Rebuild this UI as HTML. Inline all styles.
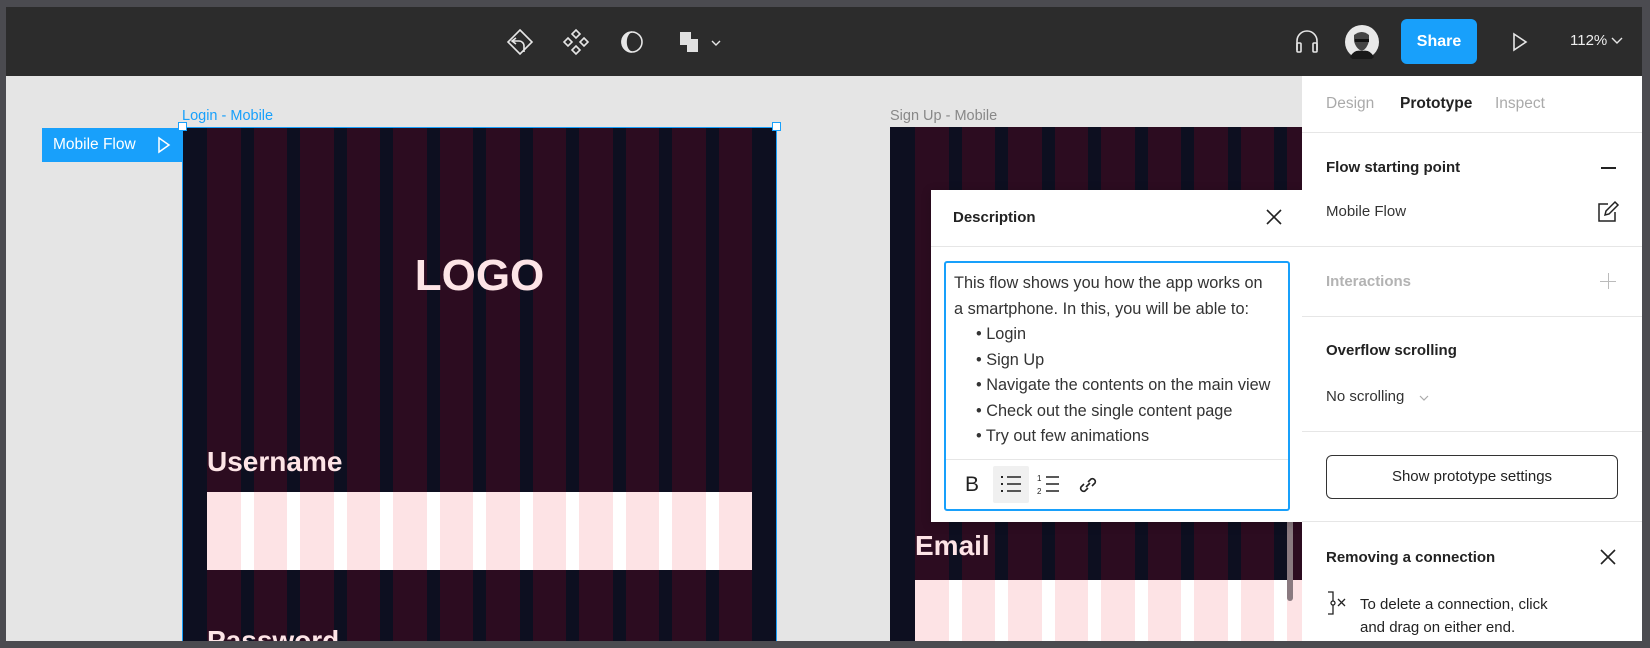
<!DOCTYPE html>
<html><head><meta charset="utf-8"><style>
*{box-sizing:border-box;margin:0;padding:0}
body{width:1650px;height:648px;overflow:hidden;background:#4b4b50;font-family:"Liberation Sans",sans-serif;position:relative}
.abs{position:absolute}
.cols{position:absolute;display:flex;gap:13px}
.cols div{flex:1;background:#2c0c20}
.pcols div{background:#fde3e5}
.ptxt{font-size:15px;color:#333}
.pb{font-size:15px;font-weight:bold;color:#222}
.div{position:absolute;left:1302px;width:340px;height:1px;background:#e6e6e6}
.dt{font-size:16.3px;color:#333;line-height:25.5px}
</style></head><body>
<div class="abs" style="left:6px;top:7px;width:1636px;height:69px;background:#2c2c2c"></div>
<div class="abs" style="left:6px;top:76px;width:1296px;height:565px;background:#e5e5e5;overflow:hidden"></div>
<svg class="abs" style="left:500px;top:22px" width="240" height="40" viewBox="500 22 240 40" fill="none" stroke="#e6e6e6" stroke-width="1.6">
<path d="M520 30 L532 42 L520 54 L508 42 Z"/>
<path d="M516 44 l-4 -3 4 -3 M512 41 h7 a5 5 0 0 1 5 5 v6"/>
<path d="M576 30 l4 4 -4 4 -4 -4z M576 46 l4 4 -4 4 -4 -4z M568 38 l4 4 -4 4 -4 -4z M584 38 l4 4 -4 4 -4 -4z"/>
<circle cx="632" cy="42" r="10"/>
<path d="M632 32 a10 10 0 0 0 0 20 a6 10 0 0 1 0 -20z" fill="#e6e6e6"/>
<path d="M680 32 h11 v7 h7 v13 h-11 v-7 h-7z" fill="#e0e0e0" stroke="none"/>
<path d="M712 41 l4 4 4 -4" stroke-width="1.4"/>
</svg>
<svg class="abs" style="left:1290px;top:22px" width="40" height="40" viewBox="1290 22 40 40" fill="none" stroke="#e6e6e6" stroke-width="1.6">
<path d="M1297 50 v-9 a10 10 0 0 1 20 0 v9"/>
<rect x="1297" y="43" width="4" height="9" rx="1"/><rect x="1313" y="43" width="4" height="9" rx="1"/>
</svg>
<svg class="abs" style="left:1345px;top:25px" width="34" height="34" viewBox="0 0 34 34">
<circle cx="17" cy="17" r="17" fill="#e8e8e8"/>
<path d="M9 10 q8 -6 15 0 l0 6 q-2 8 -7 10 q-6 -2 -8 -10z" fill="#444"/>
<rect x="10" y="14" width="14" height="3" fill="#111"/>
<path d="M5 32 q4 -8 12 -6 q8 -2 12 6 a17 17 0 0 1 -24 0z" fill="#1a1a1a"/>
</svg>
<div class="abs" style="left:1401px;top:19px;width:76px;height:45px;background:#18a0fb;border-radius:6px;color:#fff;font-weight:bold;font-size:16px;text-align:center;line-height:45px">Share</div>
<svg class="abs" style="left:1508px;top:30px" width="24" height="24" fill="none" stroke="#e6e6e6" stroke-width="1.6"><path d="M6 4 L18 12 L6 20Z"/></svg>
<div class="abs" style="left:1570px;top:32px;color:#eee;font-size:15px">112%</div>
<svg class="abs" style="left:1610px;top:36px" width="14" height="10" fill="none" stroke="#e6e6e6" stroke-width="1.4"><path d="M2 2 l5 5 5 -5"/></svg>

<div class="abs" style="left:182px;top:108px;font-size:14.5px;color:#18a0fb">Login - Mobile</div>
<div class="abs" style="left:42px;top:128px;width:140px;height:34px;background:#18a0fb;color:#fff;font-size:15.5px;line-height:34px;padding-left:11px">Mobile Flow</div>
<svg class="abs" style="left:156px;top:136px" width="16" height="18" fill="none" stroke="#fff" stroke-width="1.5"><path d="M3 2 L13 9 L3 16Z"/></svg>
<div class="abs" style="left:182px;top:127px;width:595px;height:514px;background:#0d0f20;border:1px solid #18a0fb;border-bottom:none;overflow:hidden">
  <div class="cols" style="left:24px;top:0;width:545px;height:514px"><div></div><div></div><div></div><div></div><div></div><div></div><div></div><div></div><div></div><div></div><div></div><div></div></div>
  <div class="abs" style="left:0;width:593px;top:126px;text-align:center;color:#fde4e6;font-weight:bold;font-size:44px;line-height:1">LOGO</div>
  <div class="abs" style="left:24px;top:318px;color:#fde4e6;font-weight:bold;font-size:28px">Username</div>
  <div class="abs" style="left:24px;top:364px;width:545px;height:78px;background:#fff"><div class="cols pcols" style="left:0;top:0;width:545px;height:78px"><div></div><div></div><div></div><div></div><div></div><div></div><div></div><div></div><div></div><div></div><div></div><div></div></div></div>
  <div class="abs" style="left:24px;top:497px;color:#fde4e6;font-weight:bold;font-size:28px">Password</div>
</div>
<div class="abs" style="left:178px;top:122px;width:9px;height:9px;background:#fff;border:1px solid #18a0fb"></div>
<div class="abs" style="left:772px;top:122px;width:9px;height:9px;background:#fff;border:1px solid #18a0fb"></div>

<div class="abs" style="left:890px;top:108px;font-size:14.5px;color:#888">Sign Up - Mobile</div>
<div class="abs" style="left:890px;top:127px;width:412px;height:514px;background:#0d0f20;overflow:hidden">
  <div class="cols" style="left:25px;top:0;width:545px;height:514px"><div></div><div></div><div></div><div></div><div></div><div></div><div></div><div></div><div></div><div></div><div></div><div></div></div>
  <div class="abs" style="left:25px;top:403px;color:#fde4e6;font-weight:bold;font-size:28px">Email</div>
  <div class="abs" style="left:25px;top:453px;width:545px;height:78px;background:#fff"><div class="cols pcols" style="left:0;top:0;width:545px;height:78px"><div></div><div></div><div></div><div></div><div></div><div></div><div></div><div></div><div></div><div></div><div></div><div></div></div></div>
  <div class="abs" style="left:397px;top:390px;width:6px;height:84px;border-radius:3px;background:#8a7a80"></div>
</div>

<div class="abs" style="left:931px;top:190px;width:372px;height:332px;background:#fff;box-shadow:0 2px 10px rgba(0,0,0,.2)">
  <div class="abs pb" style="left:22px;top:19px">Description</div>
  <svg class="abs" style="left:333px;top:17px" width="20" height="20" fill="none" stroke="#222" stroke-width="1.6"><path d="M3 3 L17 17 M17 3 L3 17"/></svg>
  <div class="abs" style="left:0;top:56px;width:372px;height:1px;background:#e6e6e6"></div>
  <div class="abs" style="left:13px;top:71px;width:346px;height:250px;border:2px solid #18a0fb;border-radius:3px">
    <div class="abs dt" style="left:8px;top:8px;white-space:nowrap">This flow shows you how the app works on<br>a smartphone. In this, you will be able to:</div>
    <div class="abs dt" style="left:30px;top:59px;white-space:nowrap">• Login<br>• Sign Up<br>• Navigate the contents on the main view<br>• Check out the single content page<br>• Try out few animations</div>
    <div class="abs" style="left:0;top:196px;width:342px;height:1px;background:#e6e6e6"></div>
    <div class="abs" style="left:47px;top:203px;width:36px;height:37px;background:#f0f0f0;border-radius:2px"></div>
    <div class="abs" style="left:19px;top:210px;font-size:21px;color:#222">B</div>
    <svg class="abs" style="left:52px;top:209px" width="26" height="26" fill="none" stroke="#222" stroke-width="1.5"><path d="M9 5h14M9 12h14M9 19h14"/><path d="M3 5h2M3 12h2M3 19h2" stroke-width="2"/></svg>
    <svg class="abs" style="left:90px;top:208px" width="26" height="28" fill="none" stroke="#222" stroke-width="1.5"><path d="M10 6h13M10 13h13M10 20h13"/><text x="1" y="10" font-size="8" fill="#222" stroke="none" font-family="Liberation Sans">1</text><text x="1" y="23" font-size="8" fill="#222" stroke="none" font-family="Liberation Sans">2</text></svg>
    <svg class="abs" style="left:129px;top:209px" width="26" height="26" fill="none" stroke="#222" stroke-width="1.6"><path d="M11 15 l4 -4 M9 12 l-3 3 a3 3 0 0 0 4 4 l3 -3 M17 14 l3 -3 a3 3 0 0 0 -4 -4 l-3 3"/></svg>
  </div>
</div>

<div class="abs" style="left:1302px;top:76px;width:340px;height:565px;background:#fff"></div>
<div class="abs" style="left:1326px;top:95px;font-size:15.5px;color:#aaa">Design</div>
<div class="abs pb" style="left:1400px;top:95px;font-size:15.5px">Prototype</div>
<div class="abs" style="left:1495px;top:95px;font-size:15.5px;color:#aaa">Inspect</div>
<div class="div" style="top:132px"></div>
<div class="abs pb" style="left:1326px;top:159px">Flow starting point</div>
<div class="abs" style="left:1601px;top:167px;width:15px;height:1.6px;background:#222"></div>
<div class="abs ptxt" style="left:1326px;top:203px">Mobile Flow</div>
<svg class="abs" style="left:1596px;top:200px" width="24" height="24" fill="none" stroke="#222" stroke-width="1.5"><path d="M12 4 H3 V21 H19 V12"/><path d="M9 15 l1 -4 9 -9 3 3 -9 9z"/></svg>
<div class="div" style="top:246px"></div>
<div class="abs" style="left:1326px;top:273px;font-size:15px;font-weight:bold;color:#b3b3b3">Interactions</div>
<div class="abs" style="left:1600px;top:281px;width:16px;height:1.4px;background:#bbb"></div>
<div class="abs" style="left:1607.5px;top:273px;width:1.4px;height:16px;background:#bbb"></div>
<div class="div" style="top:316px"></div>
<div class="abs pb" style="left:1326px;top:342px">Overflow scrolling</div>
<div class="abs ptxt" style="left:1326px;top:388px">No scrolling</div>
<svg class="abs" style="left:1418px;top:393px" width="12" height="10" fill="none" stroke="#aaa" stroke-width="1.2"><path d="M2 3 l4 4 4 -4"/></svg>
<div class="div" style="top:431px"></div>
<div class="abs" style="left:1326px;top:455px;width:292px;height:44px;border:1.4px solid #333;border-radius:6px;text-align:center;line-height:42px;font-size:15px;color:#222">Show prototype settings</div>
<div class="div" style="top:521px"></div>
<div class="abs pb" style="left:1326px;top:549px">Removing a connection</div>
<svg class="abs" style="left:1598px;top:547px" width="20" height="20" fill="none" stroke="#222" stroke-width="1.6"><path d="M3 3 L17 17 M17 3 L3 17"/></svg>
<svg class="abs" style="left:1326px;top:590px" width="28" height="26" fill="none" stroke="#222" stroke-width="1.3"><path d="M2 2 h5 v9 M7 15 v9 h-5"/><circle cx="7" cy="13" r="2"/><path d="M12 9 l7 7 M19 9 l-7 7"/></svg>
<div class="abs ptxt" style="left:1360px;top:593px;line-height:23px;color:#222">To delete a connection, click<br>and drag on either end.</div>
</body></html>
